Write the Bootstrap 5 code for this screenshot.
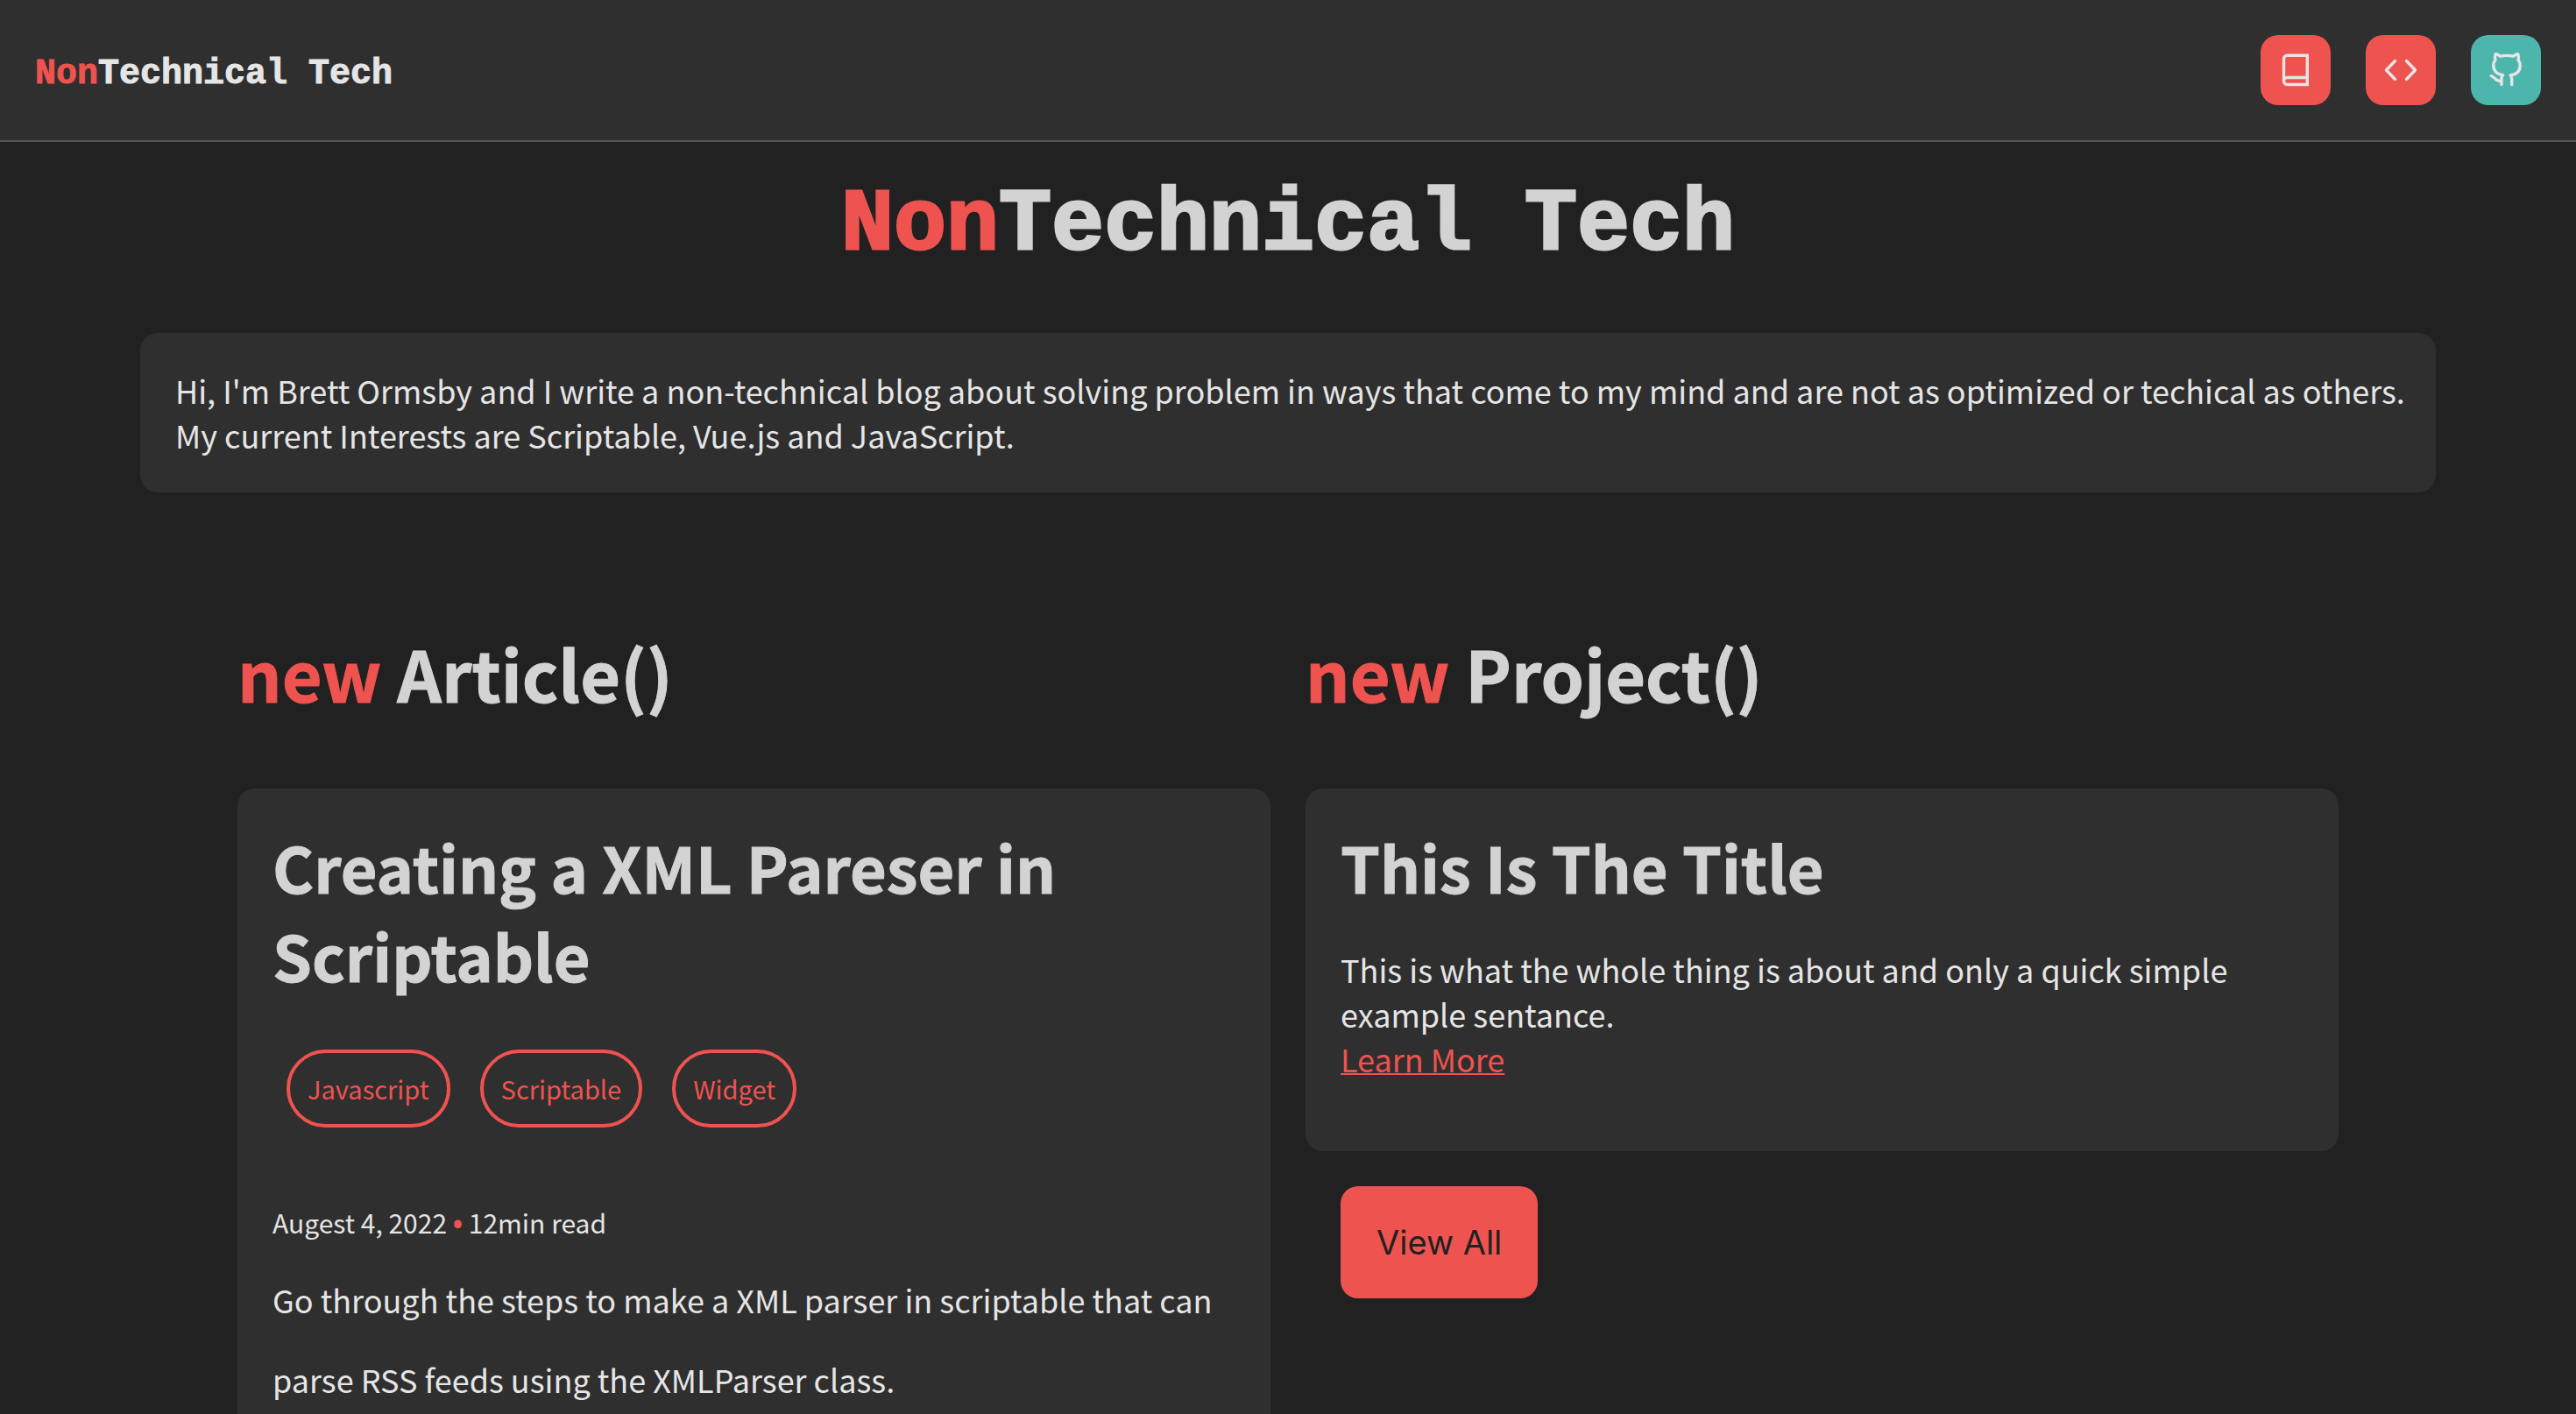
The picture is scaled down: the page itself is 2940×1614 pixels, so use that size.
<!DOCTYPE html>
<html lang="en">
<head>
<meta charset="utf-8">
<meta name="viewport" content="width=device-width, initial-scale=1">
<title>NonTechnical Tech</title>
<link href="https://cdn.jsdelivr.net/npm/bootstrap@5.3.0/dist/css/bootstrap.min.css" rel="stylesheet">
<style>
:root { --accent: #ef5350; --teal: #4db6ac; --page: #212121; --panel: #2f2f2f; --ink: #e5e5e5; --title: #d3d3d3; }
body { background: var(--page); color: var(--ink); font-family: "Noto Sans CJK SC", "Noto Sans", sans-serif; font-size: 36px; line-height: 51px; }
.accent { color: var(--accent); }
.topbar { background: var(--panel); border-bottom: 2px solid #555; padding: 40px; }
.brand-link, .hero-title { font-family: "Liberation Mono", monospace; font-weight: 700; }
.brand-link { color: var(--ink); font-size: 40px; padding-top: 8px; -webkit-text-stroke: 1px; }
.tiles { gap: 40px; }
.tile { width: 80px; height: 80px; border-radius: 20px; background: var(--accent); color: var(--ink); }
.tile-teal { background: var(--teal); }
.tile svg { width: 80px; height: 80px; fill: none; stroke: currentColor; stroke-width: 3.4; stroke-linecap: round; stroke-linejoin: round; }
.hero-title { color: var(--title); font-size: 100px; line-height: 126px; margin: 33px 0 59px; -webkit-text-stroke: 3px; }
.page-wrap { padding: 0 160px; }
.panel { background: var(--panel); border-radius: 20px; padding: 40px; }
.intro { padding-right: 24px; }
.columns { gap: 40px; margin-top: 151px; }
.half { width: 45%; }
.section-title { color: var(--title); font-size: 79px; line-height: 110px; font-weight: 700; margin: 0 0 77px; -webkit-text-stroke: 1px; }
.card-heading { color: var(--title); font-size: 72px; line-height: 98px; font-weight: 700; margin: 0; line-height: 101px; -webkit-text-stroke: 1px; }
.article-panel { padding-top: 38px; }
.tags { gap: 34px; margin: 58px 16px 0; }
.tag { border: 4px solid var(--accent); border-radius: 45px; color: var(--accent); font-size: 29px; line-height: 41px; padding: 20px; }
.meta { font-size: 30px; line-height: 41px; margin: 88px 0 0; }
.dot { font-family: "Noto Sans", sans-serif; font-weight: 700; }
.summary { line-height: 91px; margin: 21px 0 0; }
.about { margin: 42px 0 40px; }
.more-link { color: var(--accent); text-decoration-thickness: 2px; }
.view-all { background: var(--accent); color: var(--page); font-family: Inter, sans-serif; font-size: 38px; line-height: 48px; padding: 40px 41px; border: 0; border-radius: 20px; margin: 40px 0 0 40px; }
</style>
<script src="https://cdn.jsdelivr.net/npm/bootstrap@5.3.0/dist/js/bootstrap.bundle.min.js"></script>
</head>
<body class="vh-100 overflow-hidden">
<nav class="topbar d-flex align-items-center justify-content-between">
  <a class="brand-link text-decoration-none" href="#"><span class="accent">Non</span>Technical Tech</a>
  <div class="tiles d-flex">
    <a class="tile" href="#" aria-label="Articles"><svg class="d-block" viewBox="0 0 80 80"><path stroke-linejoin="miter" d="M53.300 23.200H30.500a4 4 0 0 0-4 4V52.500a4 4 0 0 0 4 4H53.300ZM26.500 52.500a4 4 0 0 1 4-4H53.300"/></svg></a>
    <a class="tile" href="#" aria-label="Projects"><svg class="d-block" viewBox="0 0 80 80"><path d="M33.500 29.500 23.500 40 33.500 50.500M46.500 29.500 56.500 40 46.500 50.500"/></svg></a>
    <a class="tile tile-teal" href="#" aria-label="GitHub"><svg class="d-block" viewBox="0 0 80 80"><path d="M35 56.500V50.500C35 48 35.500 46.500 36.700 45.700C30 45 25.800 41 25.800 34.800C25.800 32 26.500 30 28 28.300C27.200 26 27.400 23.500 28.300 21.600C30.500 21.600 32.300 23.300 33.700 24.200C38 23.200 44 23.200 48.300 24.200C49.700 23.300 51.500 21.600 53.700 21.600C54.500 23.500 54.700 26 54 28.300C55.500 30 56.200 32 56.200 34.800C56.200 41 52 45 45 46C46.300 47 46.700 48.500 46.700 50.500V56.500M35 52.500C28 53.500 27.500 47.500 23.200 46.600"/></svg></a>
  </div>
</nav>
<main class="page-wrap">
  <h1 class="hero-title text-center"><span class="accent">Non</span>Technical Tech</h1>
  <p class="panel intro mb-0">Hi, I'm Brett Ormsby and I write a non-technical blog about solving problem in ways that come to my mind and are not as optimized or techical as others.<br>My current Interests are Scriptable, Vue.js and JavaScript.</p>
  <div class="columns d-flex justify-content-center align-items-start">
    <section class="half">
      <h2 class="section-title"><span class="accent">new</span> Article()</h2>
      <article class="panel article-panel">
        <h3 class="card-heading">Creating a XML Pareser in Scriptable</h3>
        <div class="tags d-flex">
          <span class="tag">Javascript</span>
          <span class="tag">Scriptable</span>
          <span class="tag">Widget</span>
        </div>
        <p class="meta">Augest 4, 2022 <span class="accent dot">•</span> 12min read</p>
        <p class="summary">Go through the steps to make a XML parser in scriptable that can parse RSS feeds using the XMLParser class.</p>
      </article>
    </section>
    <section class="half">
      <h2 class="section-title"><span class="accent">new</span> Project()</h2>
      <article class="panel article-panel">
        <h3 class="card-heading">This Is The Title</h3>
        <p class="about">This is what the whole thing is about and only a quick simple example sentance.<br><a class="more-link" href="#">Learn More</a></p>
      </article>
      <button class="view-all" type="button">View All</button>
    </section>
  </div>
</main>
</body>
</html>
